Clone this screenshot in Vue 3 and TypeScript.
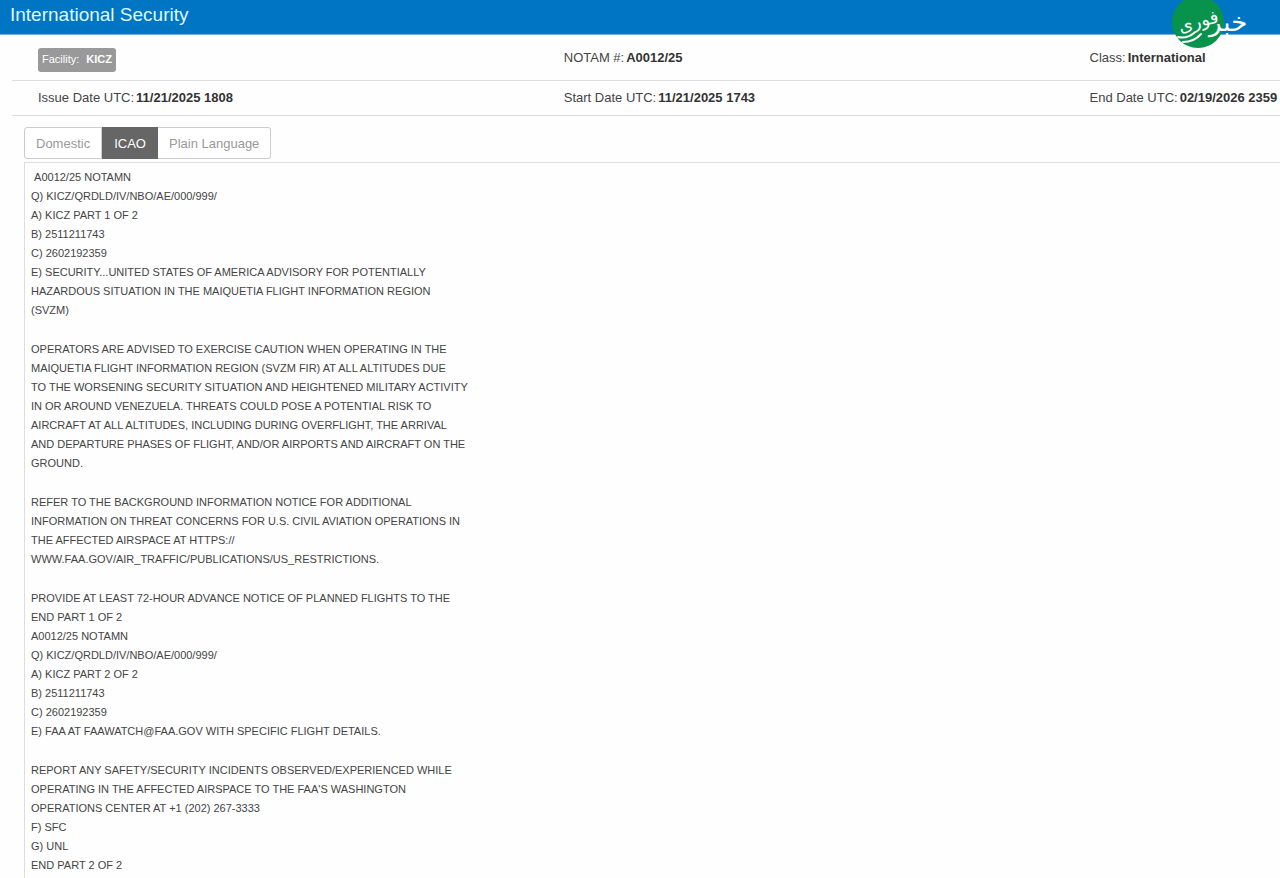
<script setup lang="ts">
import { ref } from 'vue'

interface Detail {
  label: string
  value: string
  badge?: boolean
}

const rows: Detail[][] = [
  [
    { label: 'Facility:', value: 'KICZ', badge: true },
    { label: 'NOTAM #:', value: 'A0012/25' },
    { label: 'Class:', value: 'International' },
  ],
  [
    { label: 'Issue Date UTC:', value: '11/21/2025 1808' },
    { label: 'Start Date UTC:', value: '11/21/2025 1743' },
    { label: 'End Date UTC:', value: '02/19/2026 2359' },
  ],
]

const formats = ['Domestic', 'ICAO', 'Plain Language']
const selected = ref('ICAO')

const paragraphs: string[] = [
  ` A0012/25 NOTAMN
Q) KICZ/QRDLD/IV/NBO/AE/000/999/
A) KICZ PART 1 OF 2
B) 2511211743
C) 2602192359
E) SECURITY...UNITED STATES OF AMERICA ADVISORY FOR POTENTIALLY
HAZARDOUS SITUATION IN THE MAIQUETIA FLIGHT INFORMATION REGION
(SVZM)`,
  `OPERATORS ARE ADVISED TO EXERCISE CAUTION WHEN OPERATING IN THE
MAIQUETIA FLIGHT INFORMATION REGION (SVZM FIR) AT ALL ALTITUDES DUE
TO THE WORSENING SECURITY SITUATION AND HEIGHTENED MILITARY ACTIVITY
IN OR AROUND VENEZUELA. THREATS COULD POSE A POTENTIAL RISK TO
AIRCRAFT AT ALL ALTITUDES, INCLUDING DURING OVERFLIGHT, THE ARRIVAL
AND DEPARTURE PHASES OF FLIGHT, AND/OR AIRPORTS AND AIRCRAFT ON THE
GROUND.`,
  `REFER TO THE BACKGROUND INFORMATION NOTICE FOR ADDITIONAL
INFORMATION ON THREAT CONCERNS FOR U.S. CIVIL AVIATION OPERATIONS IN
THE AFFECTED AIRSPACE AT HTTPS://
WWW.FAA.GOV/AIR_TRAFFIC/PUBLICATIONS/US_RESTRICTIONS.`,
  `PROVIDE AT LEAST 72-HOUR ADVANCE NOTICE OF PLANNED FLIGHTS TO THE
END PART 1 OF 2
A0012/25 NOTAMN
Q) KICZ/QRDLD/IV/NBO/AE/000/999/
A) KICZ PART 2 OF 2
B) 2511211743
C) 2602192359
E) FAA AT FAAWATCH@FAA.GOV WITH SPECIFIC FLIGHT DETAILS.`,
  `REPORT ANY SAFETY/SECURITY INCIDENTS OBSERVED/EXPERIENCED WHILE
OPERATING IN THE AFFECTED AIRSPACE TO THE FAA'S WASHINGTON
OPERATIONS CENTER AT +1 (202) 267-3333
F) SFC
G) UNL
END PART 2 OF 2`,
]
</script>

<template>
  <div class="page">
    <header class="bar">
      <h1>International Security</h1>
      <svg class="logo" width="84" height="50" viewBox="0 0 84 50" role="img" aria-label="خبر فوری">
        <circle cx="28" cy="22" r="26" fill="#07934b" />
        <text x="8" y="28" transform="rotate(-15 26 22)" font-size="18">فوری</text>
        <text x="39" y="31" font-size="26">خبر</text>
        <g fill="none" stroke="#fff" stroke-linecap="round">
          <path d="M8 37Q17 39 24 33" stroke-width="2" />
          <path d="M13 42Q24 42 31 34" stroke-width="2" />
        </g>
      </svg>
    </header>

    <dl class="details">
      <div v-for="(row, i) in rows" :key="i" class="row">
        <div v-for="item in row" :key="item.label" class="cell" :class="{ tagged: item.badge }">
          <div :class="{ badge: item.badge }">
            <dt>{{ item.label }}</dt>
            <dd>{{ item.value }}</dd>
          </div>
        </div>
      </div>
    </dl>

    <div class="tabs" role="group" aria-label="NOTAM format">
      <button
        v-for="format in formats"
        :key="format"
        type="button"
        :class="{ active: format === selected }"
        :aria-pressed="format === selected"
        @click="selected = format"
      >{{ format }}</button>
    </div>

    <main class="notam">
      <p v-for="(text, i) in paragraphs" :key="i">{{ text }}</p>
    </main>
  </div>
</template>

<style>
body {
  margin: 0;
  background: #fefefe;
}
</style>

<style scoped>
.page {
  display: flex;
  flex-direction: column;
  min-height: 100vh;
  font-family: "Liberation Sans", Arial, sans-serif;
  font-size: 13px;
  color: #444;
}
.bar {
  position: relative;
  height: 34px;
  padding: 0 10px;
  background: #0075c4;
  border-bottom: 1px solid #6eb4de;
}
h1 {
  margin: 0;
  font-size: 19px;
  line-height: 30px;
  font-weight: 400;
  color: #dff8ff;
}
.logo {
  position: absolute;
  top: 0;
  right: 26px;
}
.logo text {
  fill: #fff;
  font-family: "DejaVu Sans", sans-serif;
}
.details {
  margin: 0 0 0 12px;
}
.row {
  display: grid;
  grid-template-columns: 17fr 17fr 7fr;
  min-height: 34px;
  border-bottom: 1px solid #ddd;
}
.row:first-child {
  min-height: 45px;
}
.cell {
  padding: 9px 0 0 26px;
  line-height: 16px;
  white-space: nowrap;
}
.row:first-child .cell {
  padding-top: 15px;
}
.row:first-child .tagged {
  padding-top: 13px;
}
dt,
dd {
  display: inline;
  margin: 0;
}
dd {
  margin-left: 2px;
  font-weight: 700;
  color: #333;
}
.badge {
  width: fit-content;
  height: 24px;
  padding: 0 4px;
  border-radius: 3px;
  background: #999;
  color: #fff;
  font-size: 11px;
  line-height: 23px;
}
.badge dd {
  margin-left: 7px;
  color: #fff;
}
.tabs {
  display: flex;
  margin: 11px 0 3px 24px;
}
button {
  height: 32px;
  padding: 0 11px;
  border: 1px solid #ccc;
  background: #fff;
  color: #999;
  font: inherit;
}
button:first-child {
  border-radius: 3px 0 0 3px;
}
button:last-child {
  border-left: 0;
  border-radius: 0 3px 3px 0;
}
button.active {
  border-color: #666;
  background: #666;
  color: #fff;
}
.notam {
  flex: 1;
  margin-left: 24px;
  padding: 5px 6px 0;
  border-top: 1px solid #ddd;
  border-left: 1px solid #ddd;
  font-size: 11px;
  line-height: 19px;
}
p {
  margin: 0 0 20px;
  white-space: pre-wrap;
}
p:last-child {
  margin: 0;
}
</style>
